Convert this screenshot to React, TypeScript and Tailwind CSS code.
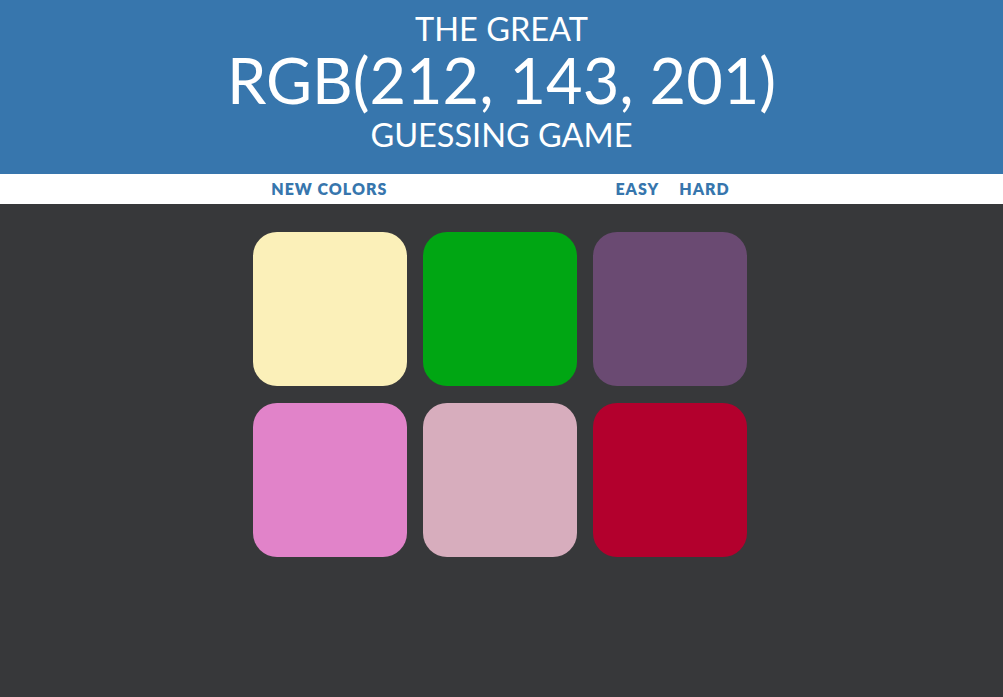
const colors = ["#fbf0b9", "#00a613", "#6a4a72", "#e183c9", "#d7adbd", "#b3002d"];

export default function App() {
  return (
    <div className="min-h-screen bg-[#37383a]" style={{ fontFamily: "Lato, 'Noto Sans', sans-serif" }}>
      <h1 className="bg-[#3776ad] pt-[11px] pb-[17px] text-center font-normal uppercase text-white">
        <span className="block text-[32.5px] leading-[36px]">The Great</span>
        <span className="block text-[63px] leading-[66px]">RGB(212, 143, 201)</span>
        <span className="block text-[32.5px] leading-[44px]">Guessing Game</span>
      </h1>

      <div className="flex h-[30px] items-center justify-center bg-white text-[16px] font-extrabold tracking-[1px] text-[#3776ad]">
        <button className="px-[8px] uppercase">New Colors</button>
        <span className="inline-block w-[210px]"></span>
        <button className="px-[10px] uppercase">Easy</button>
        <button className="px-[10px] uppercase">Hard</button>
      </div>

      <div className="flex justify-center pr-[3px] pt-[28px]">
        <div className="grid w-[494px] grid-cols-3 gap-x-[16px] gap-y-[17px]">
          {colors.map((c) => (
            <div key={c} className="h-[154px] w-[154px] rounded-[24px]" style={{ backgroundColor: c }} />
          ))}
        </div>
      </div>
    </div>
  );
}
